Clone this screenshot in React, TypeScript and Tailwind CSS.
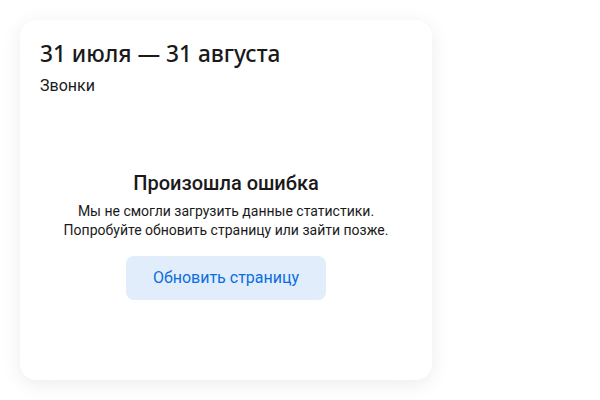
import React from 'react';

const ErrorState: React.FC<{ onRetry?: () => void }> = ({ onRetry }) => (
  <div className="flex flex-col items-center text-center">
    <h3 className="text-[20px] leading-[26px] font-medium text-[#1a1a1a]">Произошла ошибка</h3>
    <p className="mt-[6px] text-[14px] leading-[19px] text-[#1a1a1a]">
      Мы не смогли загрузить данные статистики.
      <br />
      Попробуйте обновить страницу или зайти позже.
    </p>
    <button
      onClick={onRetry}
      className="mt-[16px] w-[200px] h-[44px] rounded-[8px] bg-[#e1edfb] text-[16px] text-[#0b6ee0]"
    >
      Обновить страницу
    </button>
  </div>
);

export default function App() {
  return (
    <div className="w-[600px] h-[400px] bg-white p-5" style={{ fontFamily: 'Roboto, "Noto Sans", sans-serif' }}>
      <div className="w-[412px] h-[360px] rounded-[16px] bg-white shadow-[0_4px_20px_rgba(0,0,0,0.08)] p-5 flex flex-col">
        <h2
          className="text-[22.7px] leading-[28px] font-medium text-[#1a1a1a]"
          style={{ fontFamily: '"Noto Sans", Roboto, sans-serif' }}
        >
          31 июля — 31 августа
        </h2>
        <div className="mt-[8px] text-[16px] leading-[20px] text-[#1a1a1a]">Звонки</div>
        <div className="mt-[74px]">
          <ErrorState />
        </div>
      </div>
    </div>
  );
}
